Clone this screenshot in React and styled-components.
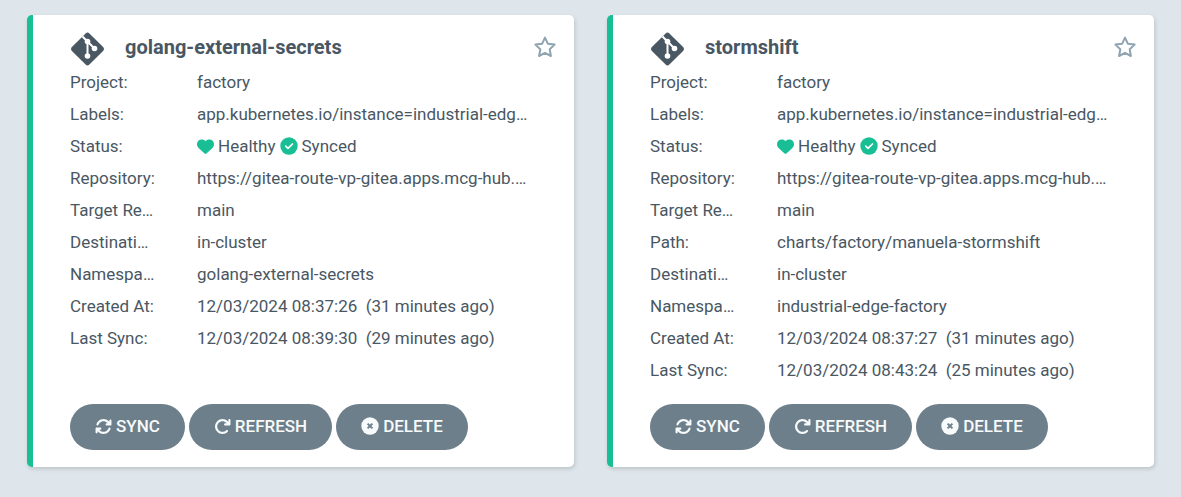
import React from 'react';
import styled, { createGlobalStyle } from 'styled-components';
import {
  FaArrowRotateRight,
  FaArrowsRotate,
  FaHeart,
} from 'react-icons/fa6';

const GlobalStyle = createGlobalStyle`
  *, *::before, *::after { box-sizing: border-box; }
  body {
    margin: 0;
    background: #dee6eb;
    color: #495763;
    font-family: Roboto, "Liberation Sans", sans-serif;
    font-size: 17px;
  }
`;

const Tiles = styled.main`
  display: grid;
  grid-template-columns: repeat(2, minmax(0, 1fr));
  gap: 33px;
  padding: 15px 27px 30px;
`;

const Tile = styled.article`
  display: flex;
  flex-direction: column;
  padding: 15px 17px 17px 37px;
  border-left: 6px solid #18be94;
  border-radius: 5px;
  background: #fff;
  box-shadow: 1px 2px 4px rgba(0, 0, 0, 0.15);
`;

const Header = styled.header`
  display: flex;
  align-items: center;
  height: 36px;
  padding-bottom: 2px;
`;

const GitMark = styled.svg`
  flex: none;
  width: 35px;
  height: 34px;
  margin-top: 4px;
`;

const Title = styled.h2`
  flex: 1;
  margin: 0 20px;
  font-size: 20px;
  line-height: 24px;
  font-weight: 700;
  overflow: hidden;
  text-overflow: ellipsis;
  white-space: nowrap;
`;

const StarButton = styled.button`
  display: flex;
  padding: 0;
  border: 0;
  background: none;
  color: #8fa4b1;
  cursor: pointer;
`;

const Details = styled.dl`
  flex: 1;
  margin: 0 21px 18px 0;
`;

const Row = styled.div`
  display: grid;
  grid-template-columns: 87px minmax(0, 1fr);
  column-gap: 40px;
  line-height: 32px;
`;

const Label = styled.dt`
  overflow: hidden;
  text-overflow: ellipsis;
  white-space: nowrap;
`;

const Value = styled.dd`
  margin: 0;
  overflow: hidden;
  text-overflow: ellipsis;
  white-space: pre;
`;

const StatusLine = styled.span`
  display: flex;
  align-items: center;
  gap: 4px;

  svg {
    color: #18be94;
  }
`;

const Actions = styled.div`
  display: flex;
  gap: 4px;
`;

const ActionButton = styled.button`
  display: flex;
  align-items: center;
  gap: 4px;
  height: 46px;
  padding: 0 25px 2px;
  border: 0;
  border-radius: 23px;
  background: #6d7f8b;
  color: #f8fbfb;
  font: 500 17px/44px Roboto, "Liberation Sans", sans-serif;
  text-transform: uppercase;
  cursor: pointer;
`;

const RepoIcon = () => (
  <GitMark viewBox="0 0 35 34" aria-hidden="true">
    <path
      d="M15.6 1.4Q17.5-.4 19.4 1.4L33.1 15.1Q34.9 17 33.1 18.9L19.4 32.6Q17.5 34.4 15.6 32.6L1.9 18.9Q.1 17 1.9 15.1Z"
      fill="#495763"
    />
    <path d="M12.5 4.5L17.5 9.5V23.5M17.5 9.5L24.5 16.5" fill="none" stroke="#fff" strokeWidth="2" />
    <circle cx="17.5" cy="9.5" r="2.8" fill="#fff" />
    <circle cx="24.5" cy="16.5" r="2.8" fill="#fff" />
    <circle cx="17.5" cy="24" r="2.8" fill="#fff" />
  </GitMark>
);

const StarIcon = () => (
  <svg width="24" height="24" viewBox="0 0 24 24" aria-hidden="true">
    <path
      d="M12 2.6L14.8 8.7L21.6 9.6L16.7 14.3L17.9 21L12 17.8L6.1 21L7.3 14.3L2.4 9.6L9.2 8.7Z"
      fill="none"
      stroke="currentColor"
      strokeWidth="2"
      strokeLinejoin="round"
    />
  </svg>
);

const SyncedIcon = () => (
  <svg width="18" height="18" viewBox="0 0 18 18" aria-hidden="true">
    <circle cx="9" cy="9" r="8.7" fill="currentColor" />
    <path d="M5.7 9.2L8 11.4L12.4 7" fill="none" stroke="#fff" strokeWidth="1.7" strokeLinecap="round" strokeLinejoin="round" />
  </svg>
);

const DeleteIcon = () => (
  <svg width="18" height="18" viewBox="0 0 18 18" aria-hidden="true">
    <circle cx="9" cy="9" r="8.7" fill="currentColor" />
    <path d="M6.6 6.6L11.4 11.4M11.4 6.6L6.6 11.4" fill="none" stroke="#6d7f8b" strokeWidth="2" />
  </svg>
);

const Status = () => (
  <StatusLine>
    <FaHeart />
    <span>Healthy</span>
    <SyncedIcon />
    <span>Synced</span>
  </StatusLine>
);

const repository = 'https://gitea-route-vp-gitea.apps.mcg-hub.blueprints.rhecoeng.com';
const labels = 'app.kubernetes.io/instance=industrial-edge-factory';

const applications = [
  {
    name: 'golang-external-secrets',
    details: [
      ['Project:', 'factory'],
      ['Labels:', labels],
      ['Status:', <Status />],
      ['Repository:', repository],
      ['Target Revision:', 'main'],
      ['Destination:', 'in-cluster'],
      ['Namespace:', 'golang-external-secrets'],
      ['Created At:', '12/03/2024 08:37:26  (31 minutes ago)'],
      ['Last Sync:', '12/03/2024 08:39:30  (29 minutes ago)'],
    ],
  },
  {
    name: 'stormshift',
    details: [
      ['Project:', 'factory'],
      ['Labels:', labels],
      ['Status:', <Status />],
      ['Repository:', repository],
      ['Target Revision:', 'main'],
      ['Path:', 'charts/factory/manuela-stormshift'],
      ['Destination:', 'in-cluster'],
      ['Namespace:', 'industrial-edge-factory'],
      ['Created At:', '12/03/2024 08:37:27  (31 minutes ago)'],
      ['Last Sync:', '12/03/2024 08:43:24  (25 minutes ago)'],
    ],
  },
];

export default function App() {
  return (
    <>
      <GlobalStyle />
      <Tiles>
        {applications.map((app) => (
          <Tile key={app.name}>
            <Header>
              <RepoIcon />
              <Title>{app.name}</Title>
              <StarButton type="button" aria-label={`Add ${app.name} to favorites`}>
                <StarIcon />
              </StarButton>
            </Header>
            <Details>
              {app.details.map(([label, value]) => (
                <Row key={label}>
                  <Label>{label}</Label>
                  <Value>{value}</Value>
                </Row>
              ))}
            </Details>
            <Actions>
              <ActionButton type="button"><FaArrowsRotate /> Sync</ActionButton>
              <ActionButton type="button"><FaArrowRotateRight /> Refresh</ActionButton>
              <ActionButton type="button"><DeleteIcon /> Delete</ActionButton>
            </Actions>
          </Tile>
        ))}
      </Tiles>
    </>
  );
}
